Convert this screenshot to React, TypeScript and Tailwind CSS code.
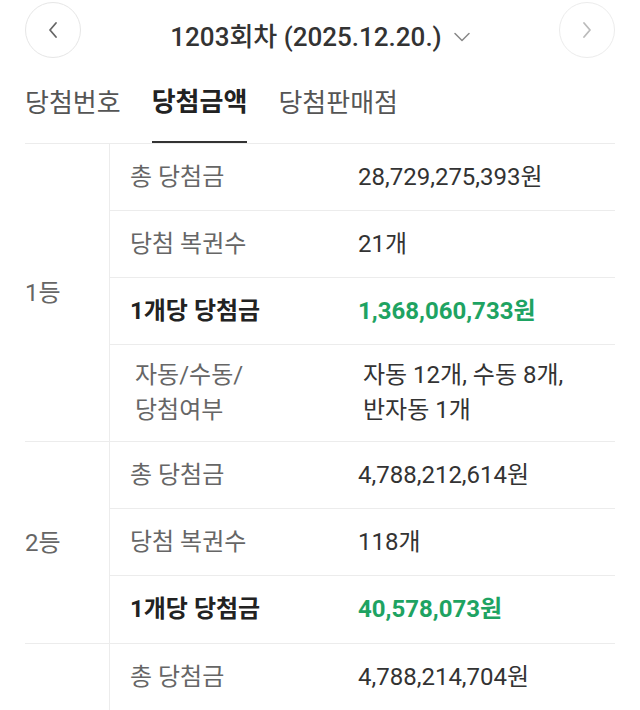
import type React from "react"

type Row = {
  label: React.ReactNode
  value: React.ReactNode
  strong?: boolean
  tall?: boolean
}

type Rank = {
  name: string
  rows: Row[]
}

const ranks: Rank[] = [
  {
    name: "1등",
    rows: [
      { label: "총 당첨금", value: "28,729,275,393원" },
      { label: "당첨 복권수", value: "21개" },
      { label: "1개당 당첨금", value: "1,368,060,733원", strong: true },
      {
        label: (
          <>
            자동/수동/
            <br />
            당첨여부
          </>
        ),
        value: (
          <>
            자동 12개, 수동 8개,
            <br />
            반자동 1개
          </>
        ),
        tall: true,
      },
    ],
  },
  {
    name: "2등",
    rows: [
      { label: "총 당첨금", value: "4,788,212,614원" },
      { label: "당첨 복권수", value: "118개" },
      { label: "1개당 당첨금", value: "40,578,073원", strong: true },
    ],
  },
  {
    name: "",
    rows: [{ label: "총 당첨금", value: "4,788,214,704원" }],
  },
]

const Chevron = ({ dir }: { dir: "left" | "right" }) => (
  <svg width="12" height="18" viewBox="0 0 12 18" fill="none">
    <path
      d={dir === "left" ? "M9 2 L3 9 L9 16" : "M3 2 L9 9 L3 16"}
      stroke="currentColor"
      strokeWidth="1.8"
      strokeLinecap="round"
      strokeLinejoin="round"
    />
  </svg>
)

const RankGroup = ({ rank }: { rank: Rank }) => (
  <div className="flex border-b border-[#ececec]">
    <div className="w-[85px] shrink-0 flex items-center border-r border-[#ececec] text-[24px] text-[#666]">
      {rank.name}
    </div>
    <div className="flex-1">
      {rank.rows.map((row, i) => (
        <div
          key={i}
          className={
            "flex items-center leading-[35px] " +
            (i < rank.rows.length - 1 ? "border-b border-[#ececec] " : "") +
            (row.tall ? "h-[96px] pl-[25px]" : "h-[67px] pl-[20px]")
          }
        >
          <div
            className={
              "w-[228px] shrink-0 text-[24px] " +
              (row.strong ? "font-bold text-[#222]" : "text-[#666]")
            }
          >
            {row.label}
          </div>
          <div
            className={
              "text-[24px] " +
              (row.strong ? "font-bold text-[#1ea362]" : "text-[#333]")
            }
          >
            {row.value}
          </div>
        </div>
      ))}
    </div>
  </div>
)

export default function App() {
  return (
    <div
      className="w-[640px] h-[710px] overflow-hidden bg-white"
      style={{ fontFamily: 'Roboto, "Noto Sans CJK KR", sans-serif' }}
    >
      <header className="flex items-center justify-between px-[25px] pt-[2px]">
        <button className="w-14 h-14 rounded-full border border-[#e6e6e6] flex items-center justify-center text-[#666]">
          <Chevron dir="left" />
        </button>
        <div className="flex items-center gap-[12px] pt-[14px] text-[26px] font-medium text-[#333]">
          <span>1203회차 (2025.12.20.)</span>
          <svg width="16" height="10" viewBox="0 0 16 10" fill="none" className="text-[#888]">
            <path d="M1 1.5 L8 8.5 L15 1.5" stroke="currentColor" strokeWidth="1.5" strokeLinecap="round" strokeLinejoin="round" />
          </svg>
        </div>
        <button className="w-14 h-14 rounded-full border border-[#ececec] flex items-center justify-center text-[#bbb]">
          <Chevron dir="right" />
        </button>
      </header>

      <div className="mx-[25px] mt-[5px] flex gap-[31px] border-b border-[#ececec]">
        <div className="h-[80px] flex items-center text-[26px] text-[#555]">당첨번호</div>
        <div className="h-[80px] flex items-center text-[26px] font-bold text-[#222] border-b-2 border-[#333] -mb-px">
          당첨금액
        </div>
        <div className="h-[80px] flex items-center text-[26px] text-[#555]">당첨판매점</div>
      </div>

      <div className="mx-[25px]">
        {ranks.map((rank, i) => (
          <RankGroup key={i} rank={rank} />
        ))}
      </div>
    </div>
  )
}
